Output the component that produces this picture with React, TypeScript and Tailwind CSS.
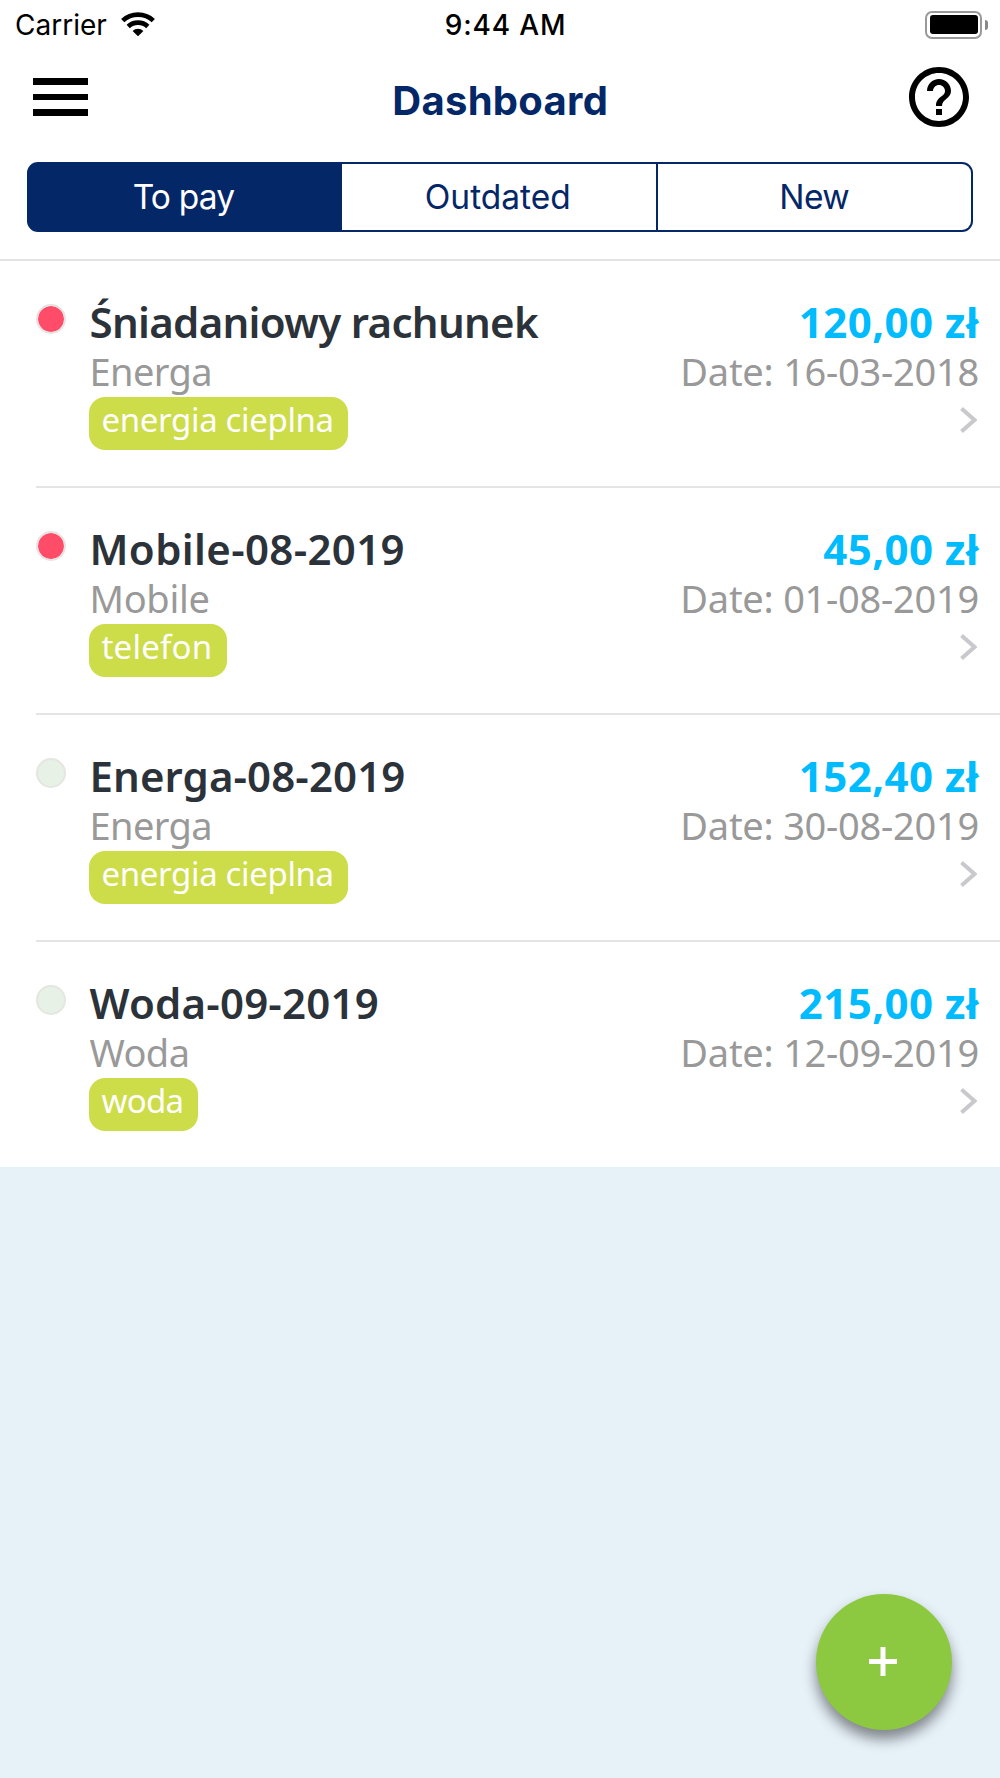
import { MdHelpOutline } from "react-icons/md";

type Bill = {
  title: string;
  titleClass: string;
  vendor: string;
  vendorClass: string;
  tag: string;
  tagClass: string;
  amount: string;
  date: string;
  overdue: boolean;
};

const bills: Bill[] = [
  {
    title: "Śniadaniowy rachunek",
    titleClass: "tracking-[-0.7px]",
    vendor: "Energa",
    vendorClass: "tracking-[-0.6px]",
    tag: "energia cieplna",
    tagClass: "w-[259px] tracking-[-0.35px]",
    amount: "120,00 zł",
    date: "16-03-2018",
    overdue: true,
  },
  {
    title: "Mobile-08-2019",
    titleClass: "tracking-[0.35px]",
    vendor: "Mobile",
    vendorClass: "tracking-[-0.3px]",
    tag: "telefon",
    tagClass: "w-[138px] tracking-[0.2px]",
    amount: "45,00 zł",
    date: "01-08-2019",
    overdue: true,
  },
  {
    title: "Energa-08-2019",
    titleClass: "tracking-[0.1px]",
    vendor: "Energa",
    vendorClass: "tracking-[-0.6px]",
    tag: "energia cieplna",
    tagClass: "w-[259px] tracking-[-0.35px]",
    amount: "152,40 zł",
    date: "30-08-2019",
    overdue: false,
  },
  {
    title: "Woda-09-2019",
    titleClass: "tracking-[0.2px]",
    vendor: "Woda",
    vendorClass: "tracking-[-0.6px]",
    tag: "woda",
    tagClass: "w-[109px] tracking-[-0.7px]",
    amount: "215,00 zł",
    date: "12-09-2019",
    overdue: false,
  },
];

function WifiIcon() {
  return (
    <svg width="34" height="24" viewBox="0 0 34 24" fill="none" aria-hidden="true">
      <path d="M1.7 8.6A22.5 22.5 0 0 1 32.3 8.6" stroke="black" strokeWidth="4.7" />
      <path d="M7.2 14.5A14.4 14.4 0 0 1 26.8 14.5" stroke="black" strokeWidth="4.7" />
      <path d="M17 24.3L11.6 18.9A8 8 0 0 1 22.4 18.9Z" fill="black" />
    </svg>
  );
}

function BatteryIcon() {
  return (
    <div className="flex items-center gap-[3px]">
      <div className="h-[28px] w-[57px] rounded-[7px] border-2 border-[#999] p-[2.5px]">
        <div className="h-full w-full rounded-[3px] bg-black" />
      </div>
      <div className="h-[10px] w-[3px] rounded-r-full bg-[#888]" />
    </div>
  );
}

function StatusBar() {
  return (
    <div className="grid h-[51px] grid-cols-3 items-center pr-[12px] pl-[15px] text-[28px] leading-[51px] text-black">
      <div className="flex items-center gap-[14px]">
        <span>Carrier</span>
        <span className="-mt-[3px]">
          <WifiIcon />
        </span>
      </div>
      <span className="pl-[8px] text-center font-medium tracking-[0.85px]">9:44 AM</span>
      <div className="-mt-[2px] flex justify-end">
        <BatteryIcon />
      </div>
    </div>
  );
}

function NavBar() {
  return (
    <div className="grid h-[111px] grid-cols-3 pr-[24.5px] pl-[33px]">
      <button className="mt-[27px] flex h-[37.5px] w-[55px] flex-col justify-between" aria-label="Menu">
        <span className="h-[6.5px] w-full bg-black" />
        <span className="h-[6.5px] w-full bg-black" />
        <span className="h-[6.5px] w-full bg-black" />
      </button>
      <h1 className="-ml-[8px] text-center text-[40px] leading-[99px] font-bold tracking-[0.3px] text-[#042767]">
        Dashboard
      </h1>
      <button className="mt-[10px] flex h-[72px] justify-end" aria-label="Help">
        <MdHelpOutline size={72} color="black" />
      </button>
    </div>
  );
}

function Tabs() {
  return (
    <div className="mx-[27px] flex h-[70px] gap-[2px] rounded-[11px] bg-[#042767] p-[2px] text-center text-[33.5px] leading-[66px] text-[#042767]">
      <button className="w-[311px] pr-[2px] tracking-[-0.8px] text-white">To pay</button>
      <button className="w-[313.5px] bg-white pr-[2px]">Outdated</button>
      <button className="flex-1 rounded-r-[9px] bg-white tracking-[-0.6px]">New</button>
    </div>
  );
}

function BillRow({ bill }: { bill: Bill }) {
  return (
    <li className="group pl-9">
      <div className="flex h-[227px] border-b-2 border-[#e4e4e4] pt-[36px] pr-[21px] group-last:h-[225px] group-last:border-b-0">
        <span
          className={
            bill.overdue
              ? "mt-[7px] size-[29.5px] shrink-0 rounded-full border-[2.5px] border-[#e6e4e2] bg-[#ff4c69] bg-clip-padding"
              : "mt-[7px] size-[29.5px] shrink-0 rounded-full border-[2.5px] border-[#e4e6e2] bg-[#e8f1e6]"
          }
        />
        <div className="ml-[23.5px] flex flex-1 flex-col items-start whitespace-nowrap">
          <h2 className={`pl-[0.5px] text-[42px] leading-[50px] font-semibold text-[#2b3239] ${bill.titleClass}`}>
            {bill.title}
          </h2>
          <p className={`mb-[2px] pl-[0.5px] text-[38px] leading-[48px] text-[#999] ${bill.vendorClass}`}>
            {bill.vendor}
          </p>
          <span
            className={`h-[53px] rounded-[16px] bg-[#cddc49] pl-[12.5px] text-[33px] leading-[46px] text-white ${bill.tagClass}`}
          >
            {bill.tag}
          </span>
        </div>
        <div className="flex flex-col items-end whitespace-nowrap">
          <p className="text-[42px] leading-[50px] font-bold tracking-[0.4px] text-[#00bcff]">{bill.amount}</p>
          <p className="text-[38px] leading-[48px] tracking-[-0.25px] text-[#999]">Date: {bill.date}</p>
          <svg className="mt-[12px] mr-[2px]" width="17" height="26" viewBox="0 0 17 26" fill="none" aria-hidden="true">
            <path d="M1.5 1.5L14.5 13L1.5 24.5" stroke="#c8c8cd" strokeWidth="4" />
          </svg>
        </div>
      </div>
    </li>
  );
}

export default function App() {
  return (
    <div className="flex h-[1778px] w-[1000px] flex-col bg-[#e6f1f8] font-['Inter',sans-serif]">
      <header className="border-b-2 border-[#e4e4e4] bg-white pb-[27px]">
        <StatusBar />
        <NavBar />
        <Tabs />
      </header>
      <ul className="bg-white font-['Noto_Sans',sans-serif]">
        {bills.map((bill) => (
          <BillRow key={bill.title} bill={bill} />
        ))}
      </ul>
      <button
        className="mt-auto mr-[48.5px] mb-[48.5px] flex size-[135.5px] items-center justify-center self-end rounded-full bg-[#8cc840] pb-[1.5px] shadow-[0_9px_14px_rgba(0,0,0,0.45)]"
        aria-label="Add bill"
      >
        <svg className="-ml-[2px]" width="28" height="29" viewBox="0 0 28 29" aria-hidden="true">
          <path d="M14 0V29M0 14.5H28" stroke="white" strokeWidth="5" />
        </svg>
      </button>
    </div>
  );
}
